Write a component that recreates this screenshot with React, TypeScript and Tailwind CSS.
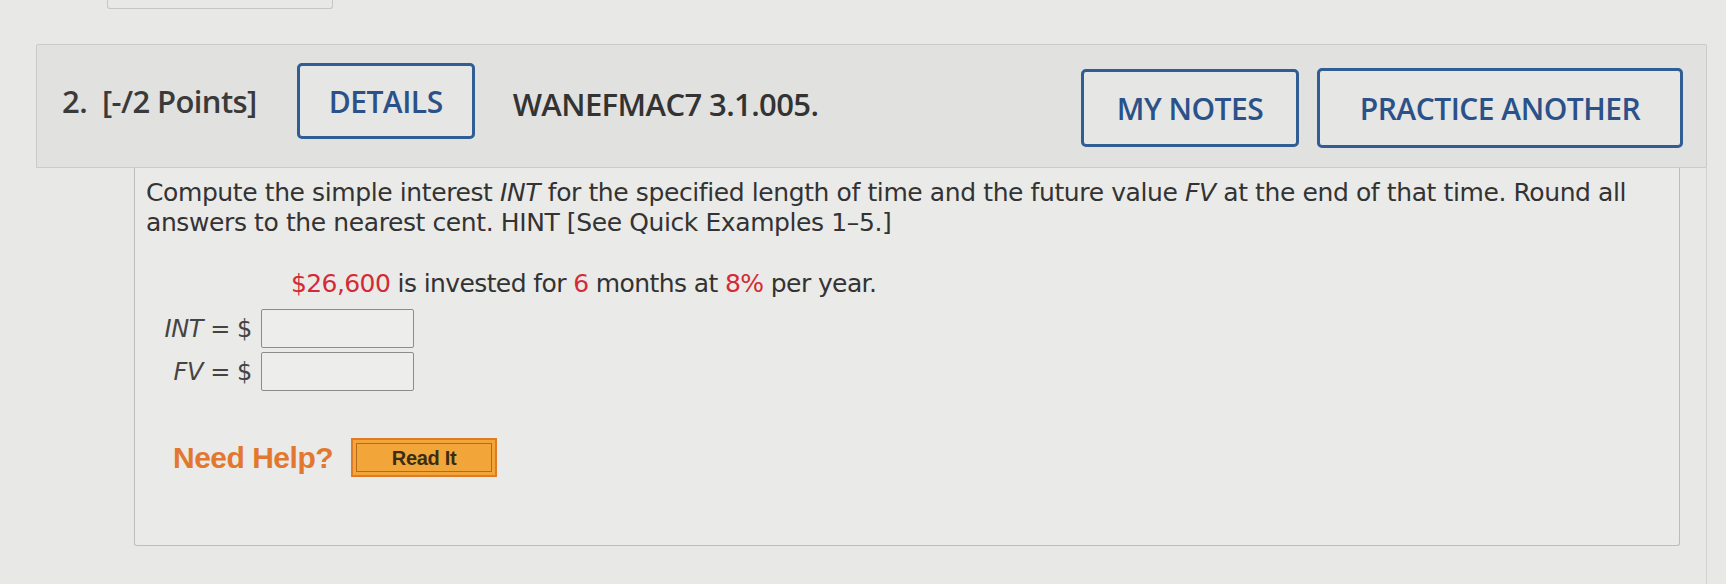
import React from 'react';

const openSans = { fontFamily: '"Open Sans", "Liberation Sans", sans-serif' };

function OutlineButton({ label, className }: { label: string; className: string }) {
  return (
    <button
      className={`flex items-center justify-center rounded-[5px] border-[3px] border-[#2f5d94] bg-[#e6e6e4] text-[30px] font-semibold tracking-[-0.5px] text-[#2b5189] ${className}`}
    >
      {label}
    </button>
  );
}

export default function App() {
  return (
    <div
      className="relative h-[584px] w-[1726px] overflow-hidden bg-[#e8e8e6] text-[#333]"
      style={openSans}
    >
      {/* bottom of the previous question's box */}
      <div className="ml-[107px] h-[9px] w-[226px] rounded-b-[3px] border-x border-b border-[#c6c6c4]" />

      <div className="ml-[36px] mt-[35px] w-[1671px]">
        {/* question header */}
        <div className="flex h-[124px] items-center rounded-t-[2px] border border-[#cacac8] bg-[#e1e1df] pl-[25px] pr-[23px]">
          <span className="mb-[10px] text-[31px] font-semibold tracking-[-0.6px] text-[#3a3a3a]">2.&nbsp; [-/2 Points]</span>
          <OutlineButton label="DETAILS" className="ml-[40px] mb-[10px] h-[76px] w-[178px]" />
          <span className="mb-[4px] ml-[38px] text-[31px] font-semibold tracking-[-0.6px] text-[#333]">WANEFMAC7 3.1.005.</span>
          <div className="ml-auto flex items-center gap-[18px] pt-[4px]">
            <OutlineButton label="MY NOTES" className="h-[78px] w-[218px]" />
            <OutlineButton label="PRACTICE ANOTHER" className="h-[80px] w-[366px]" />
          </div>
        </div>

        {/* question body */}
        <div className="flex h-[440px] border-r border-[#d4d4d2]">
          <div
            className="ml-[98px] h-[378px] w-[1546px] rounded-b-[3px] border-x border-b border-[#bdbdbb] bg-[#eaeae8] pl-[11px] pt-[10px] text-[#333]"
            style={{ fontFamily: '"DejaVu Sans", Verdana, sans-serif' }}
          >
            <p className="text-[25px] leading-[30px] tracking-[-0.4px]">
              Compute the simple interest <i>INT</i> for the specified length of time and the future value <i>FV</i> at the end of that time. Round all
              <br />
              answers to the nearest cent. HINT [See Quick Examples 1&ndash;5.]
            </p>

            <p className="ml-[145px] mt-[30px] text-[25px] leading-[31px] tracking-[-0.6px]">
              <span className="text-[#d42a35]">$26,600</span> is invested for <span className="text-[#d42a35]">6</span> months at{' '}
              <span className="text-[#d42a35]">8%</span> per year.
            </p>

            <div className="mt-[10px] grid w-[268px] grid-cols-[auto_153px] items-center gap-x-[9px] gap-y-[4px] text-[24px] tracking-[-0.4px] text-[#444]">
              <span className="justify-self-end">
                <i>INT</i> = $
              </span>
              <div className="h-[39px] rounded-[2px] border border-[#8c8c8c] bg-[#ededeb]" />
              <span className="justify-self-end">
                <i>FV</i> = $
              </span>
              <div className="h-[39px] rounded-[2px] border border-[#8c8c8c] bg-[#ededeb]" />
            </div>

            <div className="ml-[27px] mt-[44px] flex items-center gap-[18px]" style={{ fontFamily: '"Liberation Sans", Arial, sans-serif' }}>
              <span className="text-[30px] font-bold tracking-[-0.5px] text-[#e2772f]">Need Help?</span>
              <button className="h-[39px] w-[146px] border-2 border-[#e07b24] bg-[#f2a63a] p-[3px]">
                <span className="flex h-full w-full items-center justify-center border border-[#b8691f] text-[20px] font-bold tracking-[-0.3px] text-[#3b2c14]">
                  Read It
                </span>
              </button>
            </div>
          </div>
        </div>
      </div>
    </div>
  );
}
